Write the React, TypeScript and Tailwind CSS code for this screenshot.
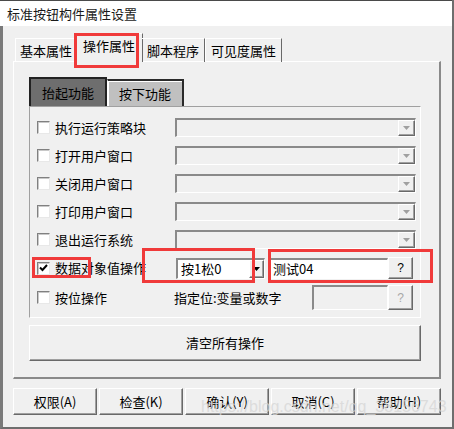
import React from "react";

const raised =
  "border-t border-l border-t-white border-l-white border-r border-b border-r-[#696969] border-b-[#696969] shadow-[inset_-1px_-1px_0_#a0a0a0]";
const sunken =
  "border-t-2 border-l-2 border-t-[#8a8a8a] border-l-[#8a8a8a] border-r border-b border-r-white border-b-white";

function Arrow({ color }: { color: string }) {
  return (
    <svg width="7" height="4" viewBox="0 0 7 4">
      <path d="M0 0H7L3.5 4Z" fill={color} />
    </svg>
  );
}

function Checkbox({ checked }: { checked?: boolean }) {
  return (
    <div className="w-[13px] h-[13px] shrink-0 bg-white border-t border-l border-t-[#808080] border-l-[#808080] border-r border-b border-r-[#e8e8e8] border-b-[#e8e8e8] shadow-[inset_1px_1px_0_#c8c8c8] flex items-center justify-center">
      {checked && (
        <svg width="9" height="8" viewBox="0 0 9 8">
          <path d="M1 3.5L3.5 6L8 1" stroke="#000" strokeWidth="2" fill="none" />
        </svg>
      )}
    </div>
  );
}

function DisabledCombo() {
  return (
    <div className={`w-[241px] h-[19px] bg-[#f0f0f0] flex justify-end items-stretch ${sunken}`}>
      <div className={`w-[17px] flex items-center justify-center bg-[#f0f0f0] ${raised}`}>
        <Arrow color="#a0a0a0" />
      </div>
    </div>
  );
}

function Row({ label }: { label: string }) {
  return (
    <div className="flex items-center h-[19px] pl-[7px]">
      <Checkbox />
      <div className="w-[120px] ml-[5px] text-[13px] leading-[16px] text-black">{label}</div>
      <DisabledCombo />
    </div>
  );
}

export default function App() {
  const font = "font-['Noto_Sans_CJK_SC','Noto_Sans_CJK_JP',sans-serif]";
  return (
    <div className={`w-[454px] h-[429px] bg-[#f0f0f0] flex flex-col relative overflow-hidden ${font} border-r-2 border-r-[#6e6e6e]`}>
      {/* title bar */}
      <div className="h-[26px] shrink-0 bg-white border-t border-t-[#4a4a4a] flex items-center pl-[7px]">
        <span className="text-[13px] leading-[16px] text-[#1a1a1a]">标准按钮构件属性设置</span>
      </div>

      {/* body */}
      <div className="flex-1 border-l-[3px] border-l-[#7a7a7a] border-b-2 border-b-[#6e6e6e] flex flex-col">
        {/* tabs */}
        <div className="flex items-end ml-[12px] mt-[7px] h-[29px] relative z-10 -mb-[1px]">
          <div className="w-[61px] h-[24px] border-t border-l border-t-white border-l-white flex items-center justify-center text-[13px] leading-[16px] text-black">
            基本属性
          </div>
          <div className="w-[68px] h-[29px] -mx-[1px] bg-[#f0f0f0] border-t border-l border-t-white border-l-white border-r border-r-[#696969] flex items-center justify-center pb-[4px] text-[13px] leading-[16px] text-black">
            操作属性
          </div>
          <div className="w-[63px] h-[24px] border-t border-r border-t-white border-r-[#696969] flex items-center justify-center text-[13px] leading-[16px] text-black">
            脚本程序
          </div>
          <div className="w-[77px] h-[24px] border-t border-l border-r border-t-white border-l-white border-r-[#696969] flex items-center justify-center text-[13px] leading-[16px] text-black">
            可见度属性
          </div>
        </div>

        {/* panel */}
        <div className="ml-[10px] w-[428px] h-[318px] border-t border-l border-t-white border-l-white border-r-2 border-b-2 border-r-[#8a8a8a] border-b-[#8a8a8a] flex flex-col">
          {/* sub tabs */}
          <div className="flex items-end ml-[15px] mt-[15px] h-[29px]">
            <div className="w-[78px] h-[29px] bg-[#6e6e6e] border-t-2 border-l-2 border-r-2 border-t-[#222] border-l-[#222] border-r-[#222] flex items-center justify-center text-[13px] leading-[16px] text-black">
              抬起功能
            </div>
            <div className="w-[77px] h-[27px] bg-[#c0c0c0] border-t-2 border-l border-r-2 border-t-[#2a2a2a] border-l-white border-r-[#2a2a2a] shadow-[inset_1px_1px_0_#fff] flex items-center justify-center text-[13px] leading-[16px] text-black">
              按下功能
            </div>
          </div>

          {/* inner panel */}
          <div className="ml-[15px] w-[392px] h-[212px] border-t border-l border-t-[#a0a0a0] border-l-[#a0a0a0] border-r border-b border-r-white border-b-white flex flex-col">
            <div className="mt-[11px] flex flex-col gap-[9px]">
              <Row label="执行运行策略块" />
              <Row label="打开用户窗口" />
              <Row label="关闭用户窗口" />
              <Row label="打印用户窗口" />
              <Row label="退出运行系统" />
            </div>

            {/* row 6 */}
            <div className="mt-[8px] flex items-center h-[22px] pl-[7px]">
              <Checkbox checked />
              <div className="w-[121px] ml-[5px] text-[13px] leading-[16px] text-black">数据对象值操作</div>
              <div className={`w-[89px] h-[21px] bg-white flex items-stretch ${sunken}`}>
                <div className="flex-1 flex items-center pl-[3px] text-[13px] leading-[16px] text-black">按1松0</div>
                <div className={`w-[15px] flex items-center justify-center bg-[#f0f0f0] ${raised}`}>
                  <Arrow color="#000" />
                </div>
              </div>
              <div className={`ml-[4px] w-[119px] h-[21px] bg-white flex items-center pl-[2px] text-[13px] leading-[16px] text-black ${sunken}`}>
                测试04
              </div>
              <div className={`w-[25px] h-[22px] flex items-center justify-center text-[12px] leading-[14px] text-black font-['Liberation_Sans',sans-serif] ${raised}`}>
                ?
              </div>
            </div>

            {/* row 7 */}
            <div className="mt-[6px] flex items-center h-[25px] pl-[7px]">
              <Checkbox />
              <div className="w-[119px] ml-[5px] text-[13px] leading-[16px] text-black">按位操作</div>
              <div className="w-[138px] text-[13px] leading-[16px] text-black">指定位:变量或数字</div>
              <div className={`w-[76px] h-[25px] bg-[#f0f0f0] ${sunken}`} />
              <div className={`w-[25px] h-[25px] flex items-center justify-center text-[12px] leading-[14px] text-[#a8a8a8] font-['Liberation_Sans',sans-serif] ${raised}`}>
                ?
              </div>
            </div>
          </div>

          {/* clear button */}
          <div className={`ml-[15px] mt-[7px] w-[392px] h-[36px] flex items-center justify-center text-[13px] leading-[16px] text-black ${raised}`}>
            清空所有操作
          </div>
        </div>

        {/* bottom buttons */}
        <div className="ml-[10px] mt-[9px] flex gap-[2px]">
          {["权限(A)", "检查(K)", "确认(Y)", "取消(C)", "帮助(H)"].map((t) => (
            <div
              key={t}
              className={`w-[84px] h-[27px] flex items-center justify-center text-[13px] leading-[16px] text-black ${raised}`}
            >
              {t}
            </div>
          ))}
        </div>
      </div>

      {/* red annotation boxes */}
      <div className="absolute left-[74px] top-[33px] w-[65px] h-[35px] border-[3px] border-[#f03a3a] z-20" />
      <div className="absolute left-[32px] top-[257px] w-[59px] h-[21px] border-[3px] border-[#f03a3a] z-20" />
      <div className="absolute left-[142px] top-[248px] w-[113px] h-[35px] border-[3px] border-[#f03a3a] z-20" />
      <div className="absolute left-[268px] top-[249px] w-[165px] h-[34px] border-[3px] border-[#f03a3a] z-20" />

      {/* watermark */}
      <div className="absolute left-[201px] top-[397px] z-20 text-[16px] leading-[20px] text-[#d6d6d6] opacity-75 font-['Liberation_Sans',sans-serif] whitespace-nowrap">
        https://blog.csdn.net/qq_38156743
      </div>
    </div>
  );
}
